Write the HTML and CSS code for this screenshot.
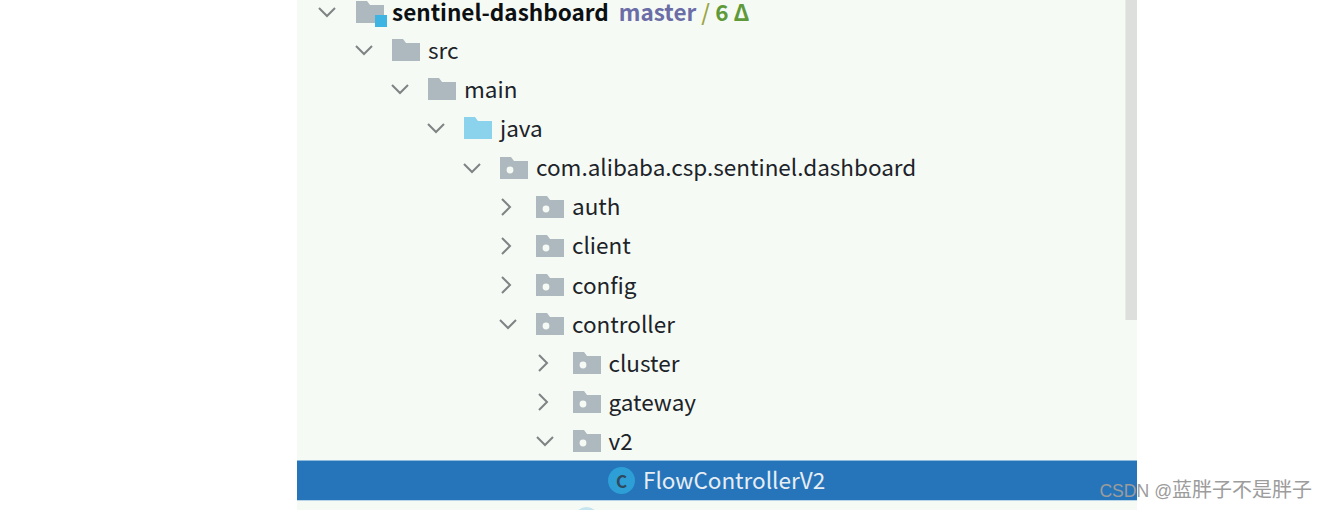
FILE: index.html
```html
<!DOCTYPE html>
<html lang="en">
<head>
    <meta charset="UTF-8">
    <title>Project tree</title>
    <link rel="stylesheet" href="styles.css">
</head>
<body>

<svg class="defs" width="0" height="0">
    <symbol id="open" viewBox="0 0 20 20"><path d="M2 6l8 8 8-8" fill="none" stroke="#7f8384" stroke-width="2"/></symbol>
    <symbol id="closed" viewBox="0 0 20 20"><path d="M4 2l8 8-8 8" fill="none" stroke="#7f8384" stroke-width="2"/></symbol>
    <symbol id="folder" viewBox="0 0 28 22"><path d="M0 0h11l3 4h14v18H0z" fill="#aeb8bf"/></symbol>
    <symbol id="folder-blue" viewBox="0 0 28 22"><path d="M0 0h11l3 4h14v18H0z" fill="#8bd2ec"/></symbol>
    <symbol id="package" viewBox="0 0 28 22"><path d="M0 0h11l3 4h14v18H0z" fill="#aeb8bf"/><circle cx="10" cy="13" r="3.4" fill="#f5faf4"/></symbol>
</svg>

<div class="tree">
    <div class="row first lvl0">
        <svg class="arrow"><use href="#open"/></svg>
        <span class="module-icon">
            <svg class="folder"><use href="#folder"/></svg>
            <i class="module-mark"></i>
        </span>
        <span class="name bold">sentinel-dashboard</span>
        <span class="branch">master</span>
        <span class="changes"><span class="slash">/</span> 6 Δ</span>
    </div>
    <div class="row lvl1"><svg class="arrow"><use href="#open"/></svg><svg class="folder"><use href="#folder"/></svg><span class="name">src</span></div>
    <div class="row lvl2"><svg class="arrow"><use href="#open"/></svg><svg class="folder"><use href="#folder"/></svg><span class="name">main</span></div>
    <div class="row lvl3"><svg class="arrow"><use href="#open"/></svg><svg class="folder"><use href="#folder-blue"/></svg><span class="name">java</span></div>
    <div class="row lvl4"><svg class="arrow"><use href="#open"/></svg><svg class="folder"><use href="#package"/></svg><span class="name">com.alibaba.csp.sentinel.dashboard</span></div>
    <div class="row lvl5"><svg class="arrow"><use href="#closed"/></svg><svg class="folder"><use href="#package"/></svg><span class="name">auth</span></div>
    <div class="row lvl5"><svg class="arrow"><use href="#closed"/></svg><svg class="folder"><use href="#package"/></svg><span class="name">client</span></div>
    <div class="row lvl5"><svg class="arrow"><use href="#closed"/></svg><svg class="folder"><use href="#package"/></svg><span class="name">config</span></div>
    <div class="row lvl5"><svg class="arrow"><use href="#open"/></svg><svg class="folder"><use href="#package"/></svg><span class="name">controller</span></div>
    <div class="row lvl6"><svg class="arrow"><use href="#closed"/></svg><svg class="folder"><use href="#package"/></svg><span class="name">cluster</span></div>
    <div class="row lvl6"><svg class="arrow"><use href="#closed"/></svg><svg class="folder"><use href="#package"/></svg><span class="name">gateway</span></div>
    <div class="row lvl6"><svg class="arrow"><use href="#open"/></svg><svg class="folder"><use href="#package"/></svg><span class="name">v2</span></div>
    <div class="row lvl7 selected">
        <span class="arrow"></span>
        <span class="class-icon">C</span>
        <span class="name">FlowControllerV2</span>
    </div>
    <div class="row lvl6">
        <span class="arrow"></span>
        <span class="next-icon"></span>
    </div>
    <div class="scrollbar"></div>
</div>

<div class="watermark"><span class="watermark-latin">CSDN @</span>蓝胖子不是胖子</div>

</body>
</html>
```

FILE: styles.css
```css
html, body {
    height: 100%;
}
body {
    margin: 0;
    background: #fff;
    overflow: hidden;
    position: relative;
    font-family: "Noto Sans CJK SC", "Noto Sans", sans-serif;
}
.defs {
    position: absolute;
}
.tree {
    position: relative;
    width: 840px;
    height: 510px;
    margin-left: 297px;
    background: #f6faf5;
    overflow: hidden;
}
.row {
    display: flex;
    align-items: center;
    height: 39.1px;
    font-size: 22.5px;
    color: #1c2329;
    white-space: nowrap;
}
.first {
    height: 23px;
    margin-bottom: 7.7px;
    line-height: 0.8;
}
.lvl0 { padding-left: 20px; }
.lvl1 { padding-left: 57px; }
.lvl2 { padding-left: 93px; }
.lvl3 { padding-left: 129px; }
.lvl4 { padding-left: 165px; }
.lvl5 { padding-left: 201px; }
.lvl6 { padding-left: 237.5px; }
.lvl7 { padding-left: 274px; }

.arrow {
    width: 20px;
    height: 20px;
    flex: none;
    margin-right: 18px;
}
.first .arrow {
    margin-right: 19px;
}
.folder {
    width: 28px;
    height: 22px;
    flex: none;
    margin-right: 8px;
    display: block;
}
.name {
    line-height: 1;
    position: relative;
    top: -1px;
}
.first .name {
    line-height: 0.8;
}
.bold {
    font-weight: 700;
    color: #0c1013;
    margin-right: 10px;
}
.branch {
    font-weight: 700;
    color: #6b6ea6;
    margin-right: 5px;
    position: relative;
    top: -1px;
}
.changes {
    font-weight: 700;
    color: #5f9a3a;
    position: relative;
    top: -1px;
}
.slash {
    color: #9aa544;
    font-weight: 500;
}
.module-icon {
    position: relative;
    flex: none;
}
.module-mark {
    position: absolute;
    right: 5px;
    bottom: -4px;
    width: 12px;
    height: 12px;
    background: #3eb4e2;
}
.class-icon {
    width: 27px;
    height: 27px;
    flex: none;
    margin-right: 8px;
    border-radius: 50%;
    background: #2d9fd6;
    color: #2f4a5e;
    font-size: 17px;
    font-weight: 700;
    line-height: 27px;
    text-align: center;
}
.next-icon {
    width: 25px;
    height: 25px;
    flex: none;
    margin-left: 1px;
    border-radius: 50%;
    background: #c4e4f0;
}
.selected {
    background: #2675bb;
    color: #e6edf3;
    box-shadow: 0 -1px 0 #8fbbdd, 0 1px 0 #b7d4e8;
}
.selected .arrow {
    margin-right: 17px;
}
.scrollbar {
    position: absolute;
    top: 0;
    right: 0;
    width: 11px;
    height: 320px;
    background: #dcdfdb;
    border-left: 1px solid #e8ebe6;
}
.watermark {
    position: absolute;
    right: 15px;
    bottom: 7px;
    font-family: "Liberation Sans", "Noto Sans CJK SC", sans-serif;
    font-size: 20px;
    color: #9c9c9c;
}
.watermark-latin {
    font-size: 17.6px;
}
```
